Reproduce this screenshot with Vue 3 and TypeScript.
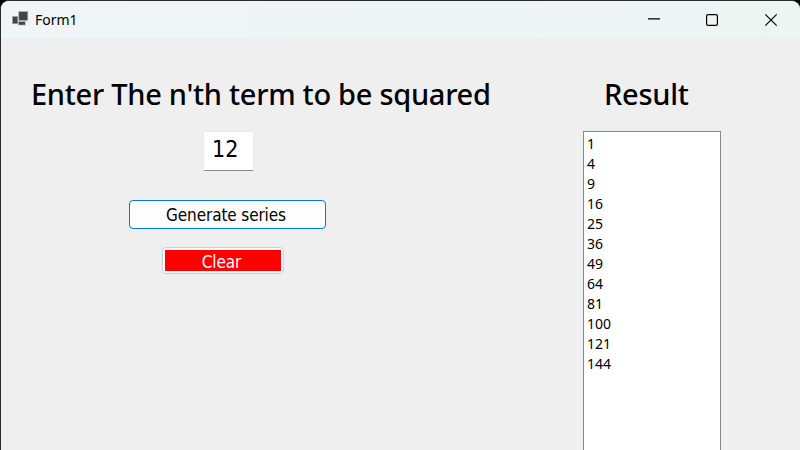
<script setup lang="ts">
import { ref } from 'vue'

const term = ref('12')
const results = ref<number[]>([])

function generate(): void {
  const n = Math.max(0, Math.floor(Number(term.value) || 0))
  results.value = Array.from({ length: n }, (_, i) => (i + 1) ** 2)
}

function clear(): void {
  term.value = ''
  results.value = []
}

generate()
</script>

<template>
  <div class="window">
    <header class="titlebar">
      <svg class="app-icon" width="17" height="16" viewBox="0 0 17 16">
        <g fill="#444446" stroke="#a9acad" stroke-width="0.6">
          <rect x="0.4" y="5.4" width="5.4" height="7.4" />
          <rect x="6.8" y="0.6" width="9" height="8.8" />
          <rect x="6.6" y="10.6" width="6.6" height="3.4" />
        </g>
      </svg>
      <span class="caption">Form1</span>
      <div class="controls">
        <svg class="control" width="58" height="36" viewBox="0 0 58 36">
          <path d="M18 16.9H30" />
        </svg>
        <svg class="control" width="58" height="36" viewBox="0 0 58 36">
          <rect x="18.6" y="12.6" width="10.8" height="10.8" rx="1.3" />
        </svg>
        <svg class="control" width="54" height="36" viewBox="0 0 54 36">
          <path d="M19.3 12.3L30.7 23.7M30.7 12.3L19.3 23.7" />
        </svg>
      </div>
    </header>
    <main class="client">
      <section class="entry">
        <h1 class="heading question">Enter The n'th term to be squared</h1>
        <input v-model="term" class="term" type="text" />
        <button class="generate" type="button" @click="generate"><span>Generate series</span></button>
        <button class="clear" type="button" @click="clear"><span>Clear</span></button>
      </section>
      <section class="output">
        <h1 class="heading result">Result</h1>
        <ul class="list">
          <li v-for="value in results" :key="value">{{ value }}</li>
        </ul>
      </section>
    </main>
  </div>
</template>

<style>
body {
  margin: 0;
  background: #000;
  overflow: hidden;
}
</style>

<style scoped>
.window {
  box-sizing: border-box;
  width: 800px;
  height: 450px;
  display: flex;
  flex-direction: column;
  overflow: hidden;
  border-top: 1px solid #2b2930;
  border-left: 1px solid #2b2b2d;
  border-radius: 9px 9px 0 0;
  background: #efefef;
  color: #000;
  font-family: "Noto Sans", sans-serif;
}
.titlebar {
  flex: none;
  height: 37px;
  display: flex;
  align-items: center;
  background: linear-gradient(90deg, #f0f5f7, #edf5f3);
}
.app-icon {
  margin: 0 6px 1px 11px;
}
.caption {
  font-size: 14px;
  line-height: 20px;
}
.controls {
  display: flex;
  margin-left: auto;
}
.control {
  fill: none;
  stroke: #000;
  stroke-width: 1.2;
}
.client {
  flex: 1;
  min-height: 0;
  display: flex;
  align-items: flex-start;
}
.entry {
  width: 582px;
  display: flex;
  flex-direction: column;
  align-items: flex-start;
}
.heading {
  margin: 36px 0 0;
  font-size: 29px;
  font-weight: 500;
  line-height: 40px;
  letter-spacing: -0.28px;
  white-space: nowrap;
}
.question {
  padding-left: 30px;
}
.term {
  box-sizing: border-box;
  width: 51px;
  height: 40px;
  margin: 17px 0 0 202px;
  padding: 0 0 4px 8px;
  border: 1px solid #e9e9e9;
  border-bottom-color: #868686;
  border-radius: 2px;
  outline: none;
  background: #fff;
  color: #000;
  font: 23px "DejaVu Sans Condensed", "DejaVu Sans", sans-serif;
  font-stretch: condensed;
}
.generate,
.clear {
  box-sizing: border-box;
  display: flex;
  align-items: center;
  justify-content: center;
  padding: 0;
  border-radius: 4px;
  font: 17px "DejaVu Sans Condensed", "DejaVu Sans", sans-serif;
  font-stretch: condensed;
  letter-spacing: -0.12px;
  white-space: nowrap;
}
.generate {
  width: 197px;
  height: 29px;
  margin: 29px 0 0 128px;
  border: 1px solid #0078d4;
  background: #fdfdfd;
  color: #000;
}
.generate span {
  margin-right: 3px;
}
.clear {
  width: 122px;
  height: 27px;
  margin: 18px 0 0 161px;
  border: 1px solid #d0d0d0;
  background: #fdfdfd;
  padding: 2px;
  color: #fff;
}
.clear span {
  box-sizing: border-box;
  width: 100%;
  height: 100%;
  padding-right: 3px;
  background: #f00;
  line-height: 24px;
}
.output {
  display: flex;
  flex-direction: column;
}
.result {
  padding-left: 21px;
}
.list {
  box-sizing: border-box;
  width: 138px;
  height: 340px;
  margin: 17px 0 0;
  padding: 2px 0 0 3px;
  border: 1px solid #828790;
  background: #fff;
  list-style: none;
  font-size: 14px;
  line-height: 20px;
}
</style>
